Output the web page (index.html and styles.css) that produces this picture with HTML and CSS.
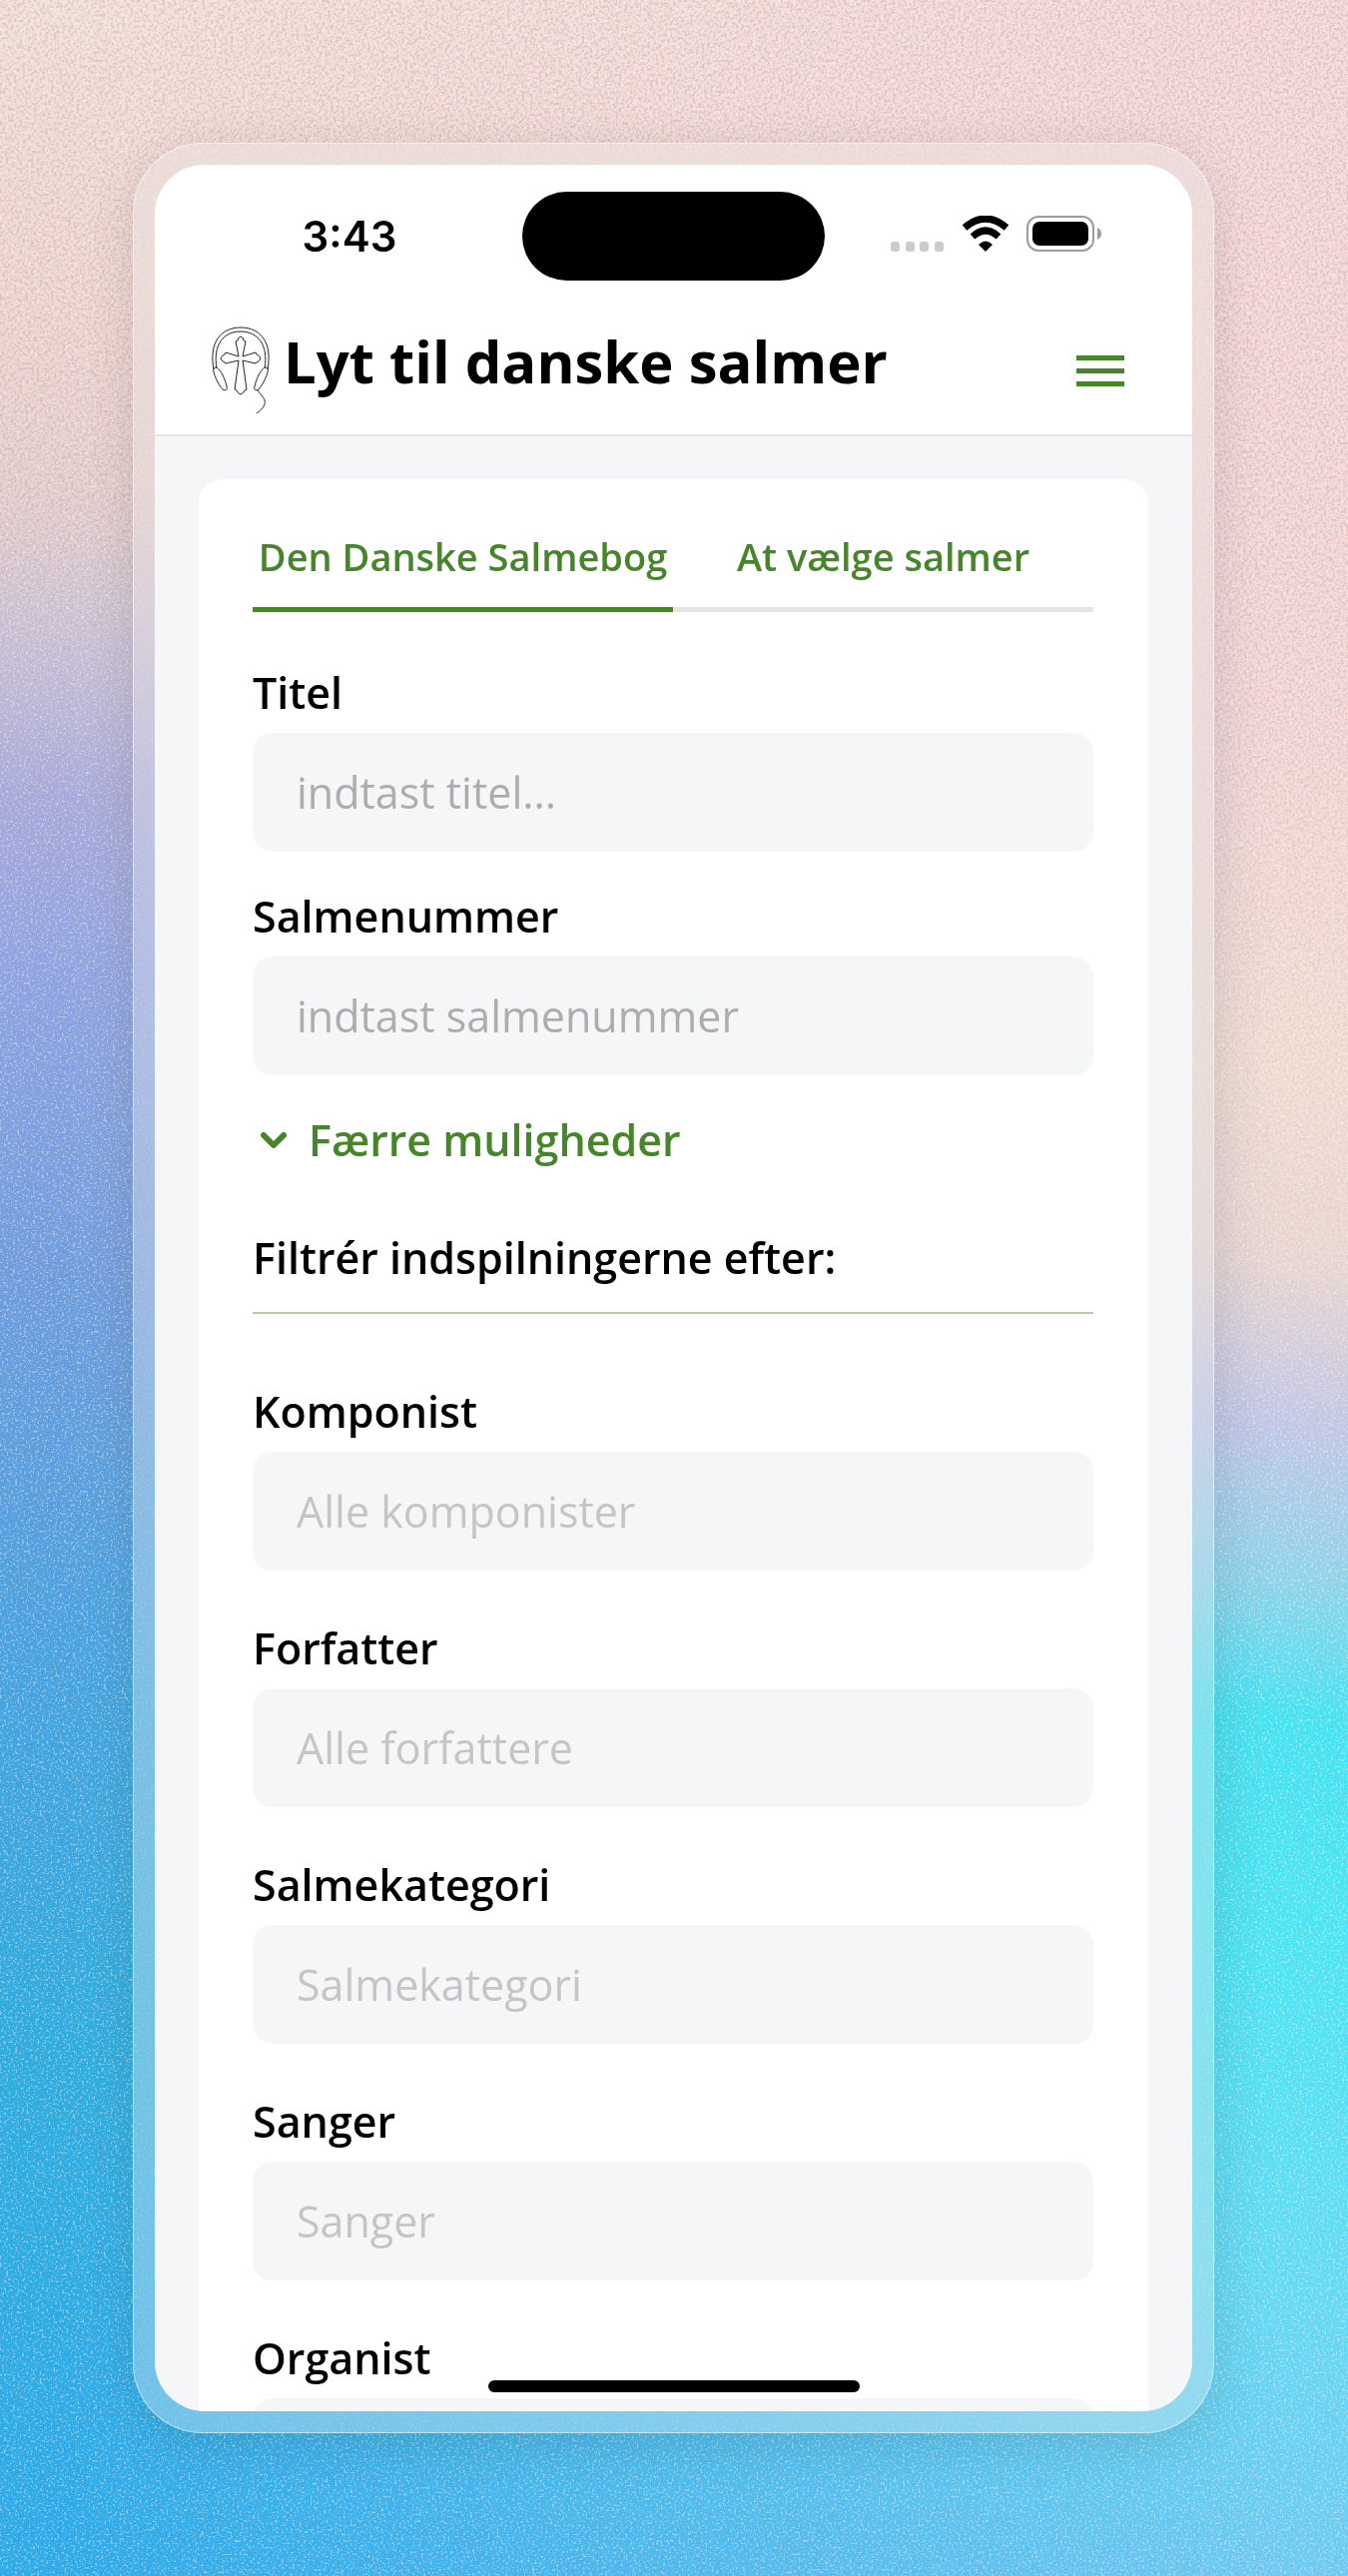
FILE: index.html
```html
<!DOCTYPE html>
<html lang="da">
<head>
    <meta charset="UTF-8">
    <meta name="viewport" content="width=device-width, initial-scale=1.0">
    <title>Lyt til danske salmer</title>
    <link rel="stylesheet" href="styles.css">
</head>
<body>
    <div class="backdrop">
        <div class="backdrop-left"></div>
        <svg class="grain" aria-hidden="true">
            <filter id="light">
                <feTurbulence type="fractalNoise" baseFrequency="0.45" numOctaves="3" seed="4"/>
                <feColorMatrix values="0 0 0 0 1  0 0 0 0 1  0 0 0 0 1  6 0 0 0 -3.3"/>
            </filter>
            <filter id="dark">
                <feTurbulence type="fractalNoise" baseFrequency="0.35" numOctaves="3" seed="9"/>
                <feColorMatrix values="0 0 0 0 .5  0 0 0 0 .4  0 0 0 0 .42  5 0 0 0 -2.3"/>
            </filter>
            <rect class="grain-light" width="100%" height="100%" filter="url(#light)"/>
            <rect class="grain-dark" width="100%" height="100%" filter="url(#dark)"/>
        </svg>
    </div>
    <div class="phone">
        <div class="screen">
            <div class="status-bar">
                <span class="time">3:43</span>
                <div class="island"></div>
                <div class="status-icons">
                    <svg width="54" height="10" viewBox="0 0 54 10" fill="#cbcbcb">
                        <rect width="9" height="10" rx="3"/>
                        <rect x="15" width="9" height="10" rx="3"/>
                        <rect x="29" width="9" height="10" rx="3"/>
                        <rect x="44" width="9" height="10" rx="3"/>
                    </svg>
                    <svg width="48" height="36" viewBox="0 0 48 36">
                        <path d="M3 12Q24 -6 45 12" fill="none" stroke="#000" stroke-width="7"/>
                        <path d="M11 21Q24 9 37 21" fill="none" stroke="#000" stroke-width="7"/>
                        <path d="M24 36L17 29Q24 22 31 29Z"/>
                    </svg>
                    <svg width="76" height="36" viewBox="0 0 76 36">
                        <rect x="1" y="1" width="66" height="34" rx="11" fill="none" stroke="#9c9c9c" stroke-width="2"/>
                        <rect x="6" y="6" width="56" height="24" rx="7"/>
                        <path d="M71 12Q75 14 75 18T71 24Z" fill="#9c9c9c"/>
                    </svg>
                </div>
            </div>
            <header class="header">
                <svg class="logo" viewBox="0 0 60 88" fill="none" stroke="#222" stroke-width="1">
                    <path d="M3 43C-2 16 10 1 30 1S62 16 57 43"/>
                    <path d="M6 42C2 18 13 5 30 5S58 18 54 42"/>
                    <path d="M3 42C1 46 9 60 12 63C15 65 17 63 16 60C15 55 11 45 8 43C7 41 5 40 3 42Z"/>
                    <path d="M57 42C59 46 51 60 48 63C45 65 43 63 44 60C45 55 49 45 52 43C53 41 55 40 57 42Z"/>
                    <path d="M47 64C52 71 61 76 46 87"/>
                    <path d="M28 30L25 15L27 14Q27 11 30 10Q33 11 33 14L35 15L32 30L45 26L46 28Q49 29 50 32Q49 35 46 36L45 37L32 34L36 63L34 64Q33 67 30 68Q27 67 26 64L24 63L28 34L15 37L14 36Q11 35 10 32Q11 29 14 28L15 26Z"/>
                </svg>
                <h1>Lyt til danske salmer</h1>
                <button type="button" class="menu" aria-label="Menu">
                    <span></span>
                    <span></span>
                    <span></span>
                </button>
            </header>
            <main class="content">
                <form class="card">
                    <div class="tabs">
                        <button type="button" class="tab active">Den Danske Salmebog</button>
                        <button type="button" class="tab">At vælge salmer</button>
                    </div>
                    <div class="search">
                        <div class="field">
                            <label for="titel">Titel</label>
                            <input type="text" id="titel" placeholder="indtast titel...">
                        </div>
                        <div class="field">
                            <label for="nummer">Salmenummer</label>
                            <input type="text" id="nummer" placeholder="indtast salmenummer">
                        </div>
                        <button type="button" class="toggle">
                            <svg width="26" height="18" viewBox="0 0 26 18" fill="none" stroke="#47852b" stroke-width="6" stroke-linecap="round" stroke-linejoin="round">
                                <path d="M3 4L13 14L23 4"/>
                            </svg>
                            Færre muligheder
                        </button>
                    </div>
                    <h2>Filtrér indspilningerne efter:</h2>
                    <div class="filters">
                        <div class="field">
                            <label for="komponist">Komponist</label>
                            <input type="text" id="komponist" placeholder="Alle komponister">
                        </div>
                        <div class="field">
                            <label for="forfatter">Forfatter</label>
                            <input type="text" id="forfatter" placeholder="Alle forfattere">
                        </div>
                        <div class="field">
                            <label for="kategori">Salmekategori</label>
                            <input type="text" id="kategori" placeholder="Salmekategori">
                        </div>
                        <div class="field">
                            <label for="sanger">Sanger</label>
                            <input type="text" id="sanger" placeholder="Sanger">
                        </div>
                        <div class="field">
                            <label for="organist">Organist</label>
                            <input type="text" id="organist">
                        </div>
                    </div>
                </form>
            </main>
            <div class="home-bar"></div>
        </div>
    </div>
</body>
</html>
```

FILE: styles.css
```css
* {
    box-sizing: border-box;
}
body {
    margin: 0;
    height: 100vh;
    padding: 143px 134px 143px 133px;
    font-family: "Open Sans", "Noto Sans", sans-serif;
    color: #000;
}
button {
    border: 0;
    padding: 0;
    background: none;
    font-family: inherit;
    color: #47852b;
    cursor: pointer;
}

/* background */
.backdrop {
    position: absolute;
    inset: 0;
    z-index: -1;
    overflow: hidden;
    background: linear-gradient(185deg, #f7dada 0%, #f5d9d6 28%, #f3dfd2 40%, #ead8d2 47%, #c3c8e6 53%, #8ed4ea 59%, #48e2f0 64%, #50e4f2 73%, #66daf2 85%, #74c2f0 100%);
}
.backdrop-left {
    position: absolute;
    inset: 0;
    background: linear-gradient(to bottom, #f4e2d8 0%, #f1d6d0 13%, #e4cfcf 20%, #c9c2d8 25%, #a5aade 31%, #8ba3e4 38%, #6b9cde 50%, #4aa2de 64%, #30acdc 80%, #30aae8 100%);
    mask-image: linear-gradient(to right, #000 5%, transparent 95%);
}
.grain {
    position: absolute;
    width: 100%;
    height: 100%;
}
.grain-light {
    opacity: .4;
}
.grain-dark {
    opacity: .4;
    mask-image: linear-gradient(#000 20%, transparent 65%);
}

/* phone */
.phone {
    height: 100%;
    padding: 21px;
    border: 1px solid rgba(255, 255, 255, .5);
    border-radius: 70px;
    background: rgba(235, 235, 235, .3);
    backdrop-filter: blur(30px);
    box-shadow: 0 10px 50px rgba(0, 0, 0, .12);
}
.screen {
    position: relative;
    height: 100%;
    overflow: hidden;
    border-radius: 50px;
    background: #f5f6f8;
}
.status-bar {
    display: grid;
    grid-template-columns: 1fr 303px 1fr;
    align-items: center;
    height: 142px;
    background: #fff;
}
.time {
    padding-left: 22px;
    font-family: Inter, sans-serif;
    font-size: 42px;
    font-weight: 600;
    text-align: center;
}
.island {
    height: 89px;
    border-radius: 45px;
    background: #000;
}
.status-icons {
    display: flex;
    align-items: flex-end;
    justify-content: flex-end;
    gap: 17px;
    padding: 0 90px 4px 0;
}
.header {
    display: flex;
    align-items: center;
    height: 130px;
    padding: 0 68px 0 56px;
    border-bottom: 2px solid #e2e5e8;
    background: #fff;
}
.logo {
    width: 60px;
    height: 88px;
}
h1 {
    flex: 1;
    margin: 0 0 18px 13px;
    font-size: 58px;
    line-height: 72px;
}
.menu {
    display: flex;
    flex-direction: column;
    gap: 8px;
}
.menu span {
    width: 48px;
    height: 5px;
    background: #47852b;
}

/* form */
.content {
    padding: 43px 44px 0;
}
.card {
    padding: 49px 55px 48px 54px;
    border-radius: 24px;
    background: #fff;
}
.tabs {
    display: grid;
    grid-template-columns: 1fr 1fr;
}
.tab {
    padding-bottom: 23px;
    border-bottom: 5px solid #e5e5e5;
    font-size: 38px;
    font-weight: 600;
    line-height: 56px;
    white-space: nowrap;
}
.active {
    border-color: #47852b;
}
.search {
    display: flex;
    flex-direction: column;
    gap: 35px;
    margin-top: 51px;
}
.field {
    display: flex;
    flex-direction: column;
    gap: 10px;
}
label, h2, .toggle {
    font-size: 43px;
    font-weight: 600;
    line-height: 60px;
}
input {
    width: 100%;
    height: 119px;
    padding: 0 44px;
    border: 0;
    border-radius: 20px;
    background: #f5f6f8;
    font-family: inherit;
    font-size: 43px;
}
input::placeholder {
    color: #adadad;
}
.filters input::placeholder {
    color: #c4c5c7;
}
.toggle {
    display: flex;
    align-items: center;
    gap: 22px;
    padding-left: 8px;
}
h2 {
    margin: 58px 0 68px;
    padding-bottom: 24px;
    border-bottom: 2px solid #b3cba6;
}
.filters {
    display: flex;
    flex-direction: column;
    gap: 48px;
}
.home-bar {
    position: absolute;
    bottom: 19px;
    left: 50%;
    width: 372px;
    height: 12px;
    margin-left: -186px;
    border-radius: 6px;
    background: #000;
}
```
